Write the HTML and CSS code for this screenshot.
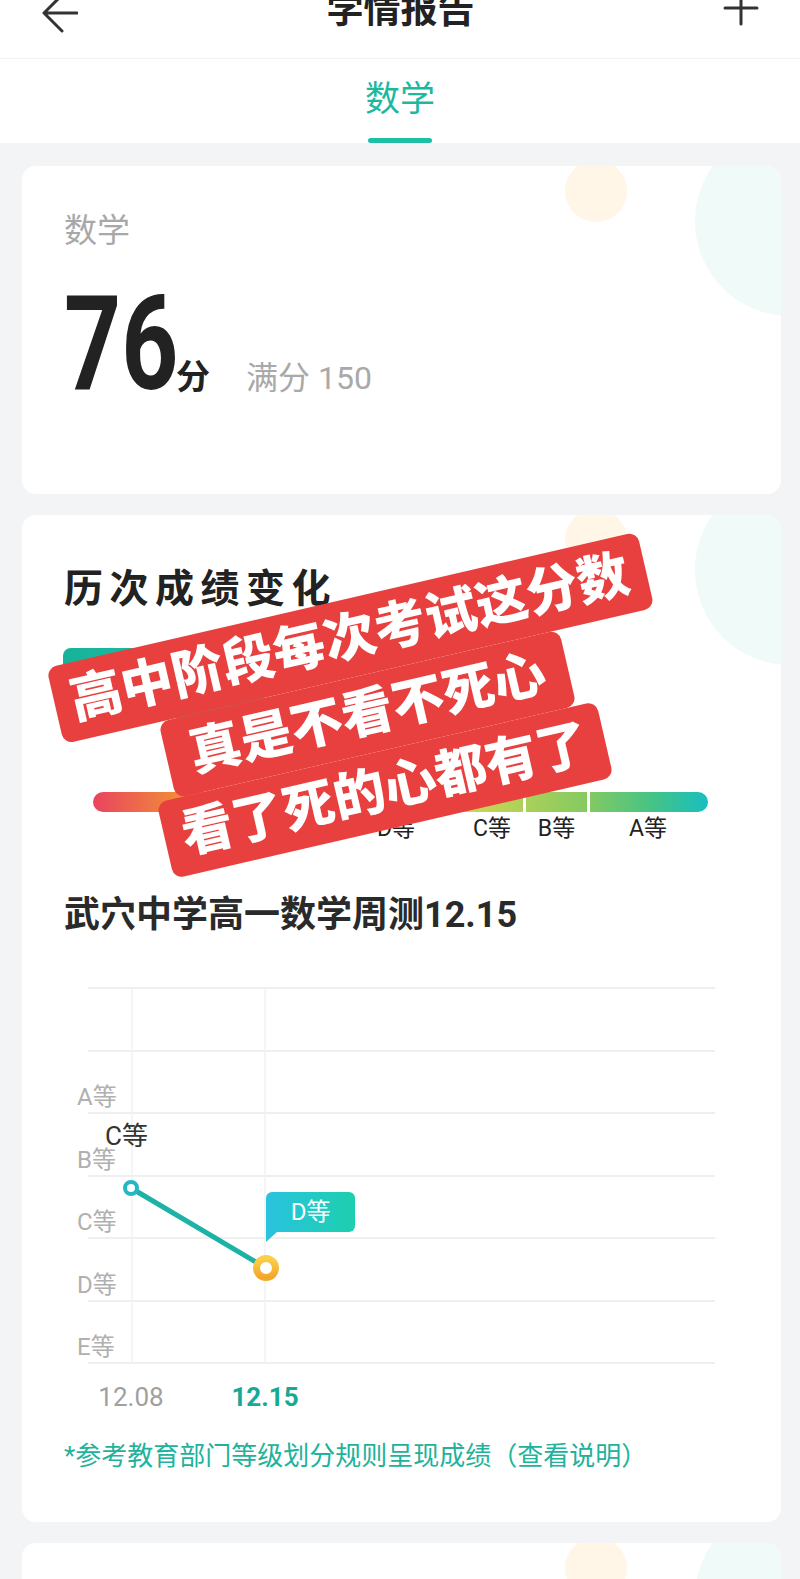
FILE: index.html
```html
<!DOCTYPE html>
<html lang="zh-CN">
<head>
    <meta charset="UTF-8">
    <meta name="viewport" content="width=device-width, initial-scale=1.0">
    <title>学情报告</title>
    <link rel="stylesheet" href="styles.css">
</head>
<body>

    <!-- Top bar -->
    <header class="topbar">
        <svg class="back" width="36" height="40" viewBox="0 0 36 40">
            <path d="M35 20H2M20 2L2 20l18 18" fill="none" stroke="#333" stroke-width="3" stroke-linecap="round" stroke-linejoin="round"/>
        </svg>
        <h1>学情报告</h1>
        <svg class="add" width="36" height="36" viewBox="0 0 36 36">
            <path d="M18 2V34M2 18H34" fill="none" stroke="#333" stroke-width="3" stroke-linecap="round"/>
        </svg>
    </header>

    <!-- Subject tabs -->
    <nav class="tabs">
        <a class="tab active">数学</a>
    </nav>

    <main class="content">

        <!-- Score card -->
        <section class="card score-card">
            <div class="subject">数学</div>
            <div class="score-row">
                <span class="score">76</span>
                <span class="unit">分</span>
                <span class="full">满分 150</span>
            </div>
        </section>

        <!-- Trend card -->
        <section class="card trend-card">
            <h2>历次成绩变化</h2>
            <div class="current-tag"></div>

            <div class="level-bar">
                <div class="seg seg-e"></div>
                <div class="seg seg-d"></div>
                <div class="seg seg-c"></div>
                <div class="seg seg-b"></div>
                <div class="seg seg-a"></div>
            </div>
            <div class="level-labels">
                <span class="seg-e">E等</span>
                <span class="seg-d">D等</span>
                <span class="seg-c">C等</span>
                <span class="seg-b">B等</span>
                <span class="seg-a">A等</span>
            </div>

            <h3>武穴中学高一数学周测12.15</h3>

            <div class="chart">
                <div class="grid">
                    <div class="row"></div>
                    <div class="row"><span>A等</span></div>
                    <div class="row"><span>B等</span></div>
                    <div class="row"><span>C等</span></div>
                    <div class="row"><span>D等</span></div>
                    <div class="row"><span>E等</span></div>
                </div>
                <svg class="plot" width="627" height="377" viewBox="0 0 627 377">
                    <defs>
                        <linearGradient id="gold" x1="0" y1="0" x2="0" y2="1">
                            <stop offset="0" stop-color="#f8d04c"/>
                            <stop offset="1" stop-color="#f4a62a"/>
                        </linearGradient>
                    </defs>
                    <line x1="44" y1="2" x2="44" y2="375" stroke="#f2f2f2" stroke-width="1.5"/>
                    <line x1="177" y1="2" x2="177" y2="375" stroke="#f2f2f2" stroke-width="1.5"/>
                    <line x1="43" y1="201" x2="178" y2="281" stroke="#1db2a6" stroke-width="5"/>
                    <circle cx="43" cy="201" r="6" fill="#fff" stroke="#23b7c4" stroke-width="4"/>
                    <circle cx="178" cy="281" r="9.5" fill="#fff" stroke="url(#gold)" stroke-width="7"/>
                </svg>
                <span class="point-label">C等</span>
                <span class="tip">D等</span>
            </div>

            <div class="x-labels">
                <span>12.08</span>
                <span class="now">12.15</span>
            </div>

            <p class="note">*参考教育部门等级划分规则呈现成绩（查看说明）</p>

            <!-- sticker pasted over the card -->
            <div class="sticker">
                <span>高中阶段每次考试这分数</span>
                <span class="mid">真是不看不死心</span>
                <span>看了死的心都有了</span>
            </div>
        </section>

        <section class="card next-card"></section>
    </main>

</body>
</html>
```

FILE: styles.css
```css
body {
    font-family: Roboto, "Noto Sans CJK SC", sans-serif;
    margin: 0;
    padding: 0;
    background-color: #f3f4f6;
    color: #222;
    overflow: hidden;
}
.topbar {
    height: 88px;
    margin-top: -30px;
    padding: 0 41px 0 42px;
    display: flex;
    align-items: center;
    justify-content: space-between;
    background-color: #fff;
}
.topbar .back {
    margin-top: -2px;
}
.topbar .add {
    margin-top: -12px;
}
.topbar h1 {
    margin: -8px 0 0;
    font-size: 37px;
    line-height: 37px;
    font-weight: 700;
    color: #222;
}
.tabs {
    height: 85px;
    box-sizing: border-box;
    border-top: 1px solid #f2f2f2;
    padding-top: 23px;
    display: flex;
    justify-content: center;
    background-color: #fff;
}
.tab {
    font-size: 35px;
    line-height: 35px;
    color: #1db99e;
    text-decoration: none;
}
.tab.active::after {
    content: "";
    display: block;
    width: 64px;
    height: 5px;
    margin: 21px auto 0;
    border-radius: 3px;
    background-color: #1fbfa6;
}
.content {
    padding: 23px 19px 0 22px;
}
.card {
    position: relative;
    overflow: hidden;
    margin-bottom: 21px;
    padding: 0 42px;
    border-radius: 14px;
    background-color: #fff;
}
.card::before,
.card::after {
    content: "";
    position: absolute;
    border-radius: 50%;
}
.card::before {
    left: 543px;
    top: -6px;
    width: 62px;
    height: 62px;
    background-color: #fff6e7;
}
.card::after {
    left: 673px;
    top: -40px;
    width: 190px;
    height: 190px;
    background-color: #f0faf8;
}
.card > * {
    position: relative;
    z-index: 1;
}

/* score card */
.score-card {
    height: 328px;
    box-sizing: border-box;
    padding-top: 48px;
}
.subject {
    font-size: 33px;
    line-height: 33px;
    color: #a8a8a8;
}
.score-row {
    margin-top: 31px;
    display: flex;
    align-items: baseline;
}
.score {
    display: inline-block;
    width: 112px;
    white-space: nowrap;
    font-size: 132px;
    line-height: 132px;
    font-weight: 700;
    transform: scaleX(0.755);
    transform-origin: left center;
}
.unit {
    font-size: 34px;
    font-weight: 700;
}
.full {
    margin-left: 36px;
    font-size: 32px;
    color: #a9a9a9;
}

/* trend card */
.trend-card {
    padding-top: 55px;
    padding-bottom: 53px;
}
.trend-card h2 {
    margin: 0;
    font-size: 39px;
    line-height: 39px;
    letter-spacing: 6.5px;
    font-weight: 700;
}
.current-tag {
    width: 200px;
    height: 70px;
    margin-top: 39px;
    margin-left: -1px;
    border-radius: 8px;
    background: linear-gradient(90deg, #16b39a, #25c1aa);
}
.level-bar {
    display: flex;
    width: 615px;
    height: 20px;
    margin: 74px 0 0 29px;
    border-radius: 10px;
    overflow: hidden;
    background: linear-gradient(90deg, #e9445f 0%, #f28c38 14%, #f5b944 40%, #c9d655 62%, #86ca60 80%, #45c386 91%, #17bfc0 100%);
}
.level-bar .seg + .seg {
    border-left: 3px solid #fff;
}
.seg-e { width: 240px; }
.seg-d { width: 126px; }
.seg-c { width: 66px; }
.seg-b { width: 63px; }
.seg-a { width: 120px; }
.level-labels {
    display: flex;
    margin: 5px 0 0 29px;
    font-size: 23px;
    line-height: 23px;
    color: #222;
}
.level-labels span {
    text-align: center;
}
.trend-card h3 {
    margin: 57px 0 0;
    font-size: 36px;
    line-height: 36px;
    font-weight: 700;
    color: #2a2a2a;
}

/* chart */
.chart {
    position: relative;
    width: 627px;
    margin: 54px 0 0 24px;
}
.grid {
    border-top: 2px solid #efefef;
}
.grid .row {
    height: 60.5px;
    border-bottom: 2px solid #efefef;
    display: flex;
    align-items: flex-end;
}
.grid .row span {
    margin: 0 0 3px -11px;
    font-size: 24px;
    line-height: 24px;
    color: #b0b0b0;
}
.plot {
    position: absolute;
    left: 0;
    top: 0;
}
.point-label {
    position: absolute;
    left: 17px;
    top: 136px;
    font-size: 26px;
    line-height: 26px;
    color: #333;
}
.tip {
    position: absolute;
    left: 178px;
    top: 205px;
    width: 89px;
    height: 40px;
    border-radius: 6px 6px 6px 0;
    background: linear-gradient(90deg, #29c3de, #1dcfae);
    color: #fff;
    font-size: 24px;
    line-height: 40px;
    text-align: center;
}
.tip::after {
    content: "";
    position: absolute;
    left: 0;
    top: 100%;
    border-top: 10px solid #29c3de;
    border-right: 11px solid transparent;
}
.x-labels {
    display: flex;
    margin-top: 20px;
    font-size: 26px;
    line-height: 26px;
    color: #a0a0a0;
}
.x-labels span {
    width: 134px;
    text-align: center;
}
.x-labels .now {
    color: #16a994;
    font-weight: 700;
}
.note {
    margin: 33px 0 0;
    font-size: 26px;
    line-height: 26px;
    color: #22b29b;
}

/* sticker */
.sticker {
    position: absolute;
    left: 43.5px;
    top: 81.5px;
    z-index: 2;
    width: 603px;
    display: flex;
    flex-direction: column;
    align-items: center;
    transform: rotate(-13deg);
}
.sticker span {
    display: block;
    padding: 0 17px;
    border-radius: 10px;
    background-color: #e8403f;
    color: #fff;
    font-size: 52px;
    line-height: 78px;
    font-weight: 900;
    white-space: nowrap;
}
.sticker .mid {
    padding: 0 23px;
}

.next-card {
    height: 300px;
}
```
